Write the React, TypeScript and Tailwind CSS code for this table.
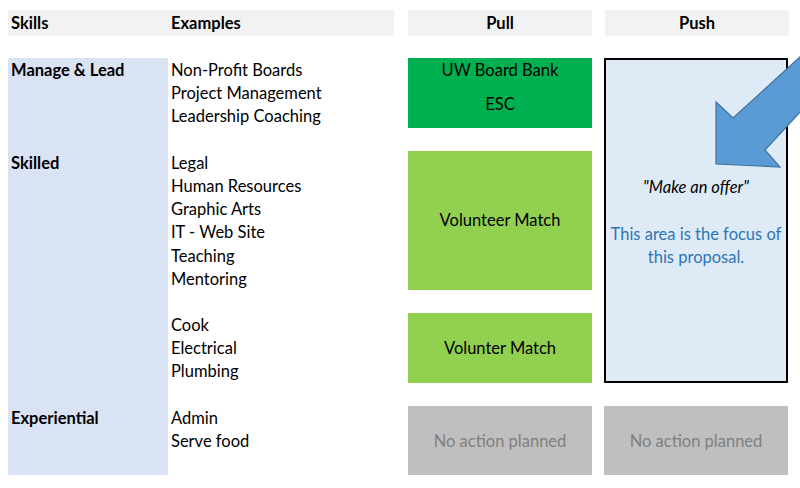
import React from "react";

type Line = { row: number; text: string };

const skills: Line[] = [
  { row: 1, text: "Manage & Lead" },
  { row: 5, text: "Skilled" },
  { row: 16, text: "Experiential" },
];

const examples: Line[] = [
  { row: 1, text: "Non-Profit Boards" },
  { row: 2, text: "Project Management" },
  { row: 3, text: "Leadership Coaching" },
  { row: 5, text: "Legal" },
  { row: 6, text: "Human Resources" },
  { row: 7, text: "Graphic Arts" },
  { row: 8, text: "IT - Web Site" },
  { row: 9, text: "Teaching" },
  { row: 10, text: "Mentoring" },
  { row: 12, text: "Cook" },
  { row: 13, text: "Electrical" },
  { row: 14, text: "Plumbing" },
  { row: 16, text: "Admin" },
  { row: 17, text: "Serve food" },
];

export default function App() {
  return (
    <div
      className="relative w-[800px] h-[488px] overflow-hidden bg-white text-[16.5px] text-black"
      style={{ fontFamily: "Lato, 'Liberation Sans', sans-serif" }}
    >
      <div className="pt-[10px] pl-2">
        {/* header row */}
        <div className="grid grid-cols-[386px_184px_183px] gap-x-[14px] h-6 font-bold leading-[26px]">
          <div className="bg-[#f2f2f2] flex">
            <span className="w-[160px] pl-[3px]">Skills</span>
            <span className="pl-[3px]">Examples</span>
          </div>
          <div className="bg-[#f2f2f2] text-center">Pull</div>
          <div className="bg-[#f2f2f2] text-center -ml-px">Push</div>
        </div>

        {/* body */}
        <div className="mt-6 grid grid-cols-[160px_226px_14px_184px_13px_183px] grid-rows-[repeat(18,23.2px)] leading-[25px]">
          <div className="col-start-1 row-start-1 row-span-18 bg-[#dae3f3]" />
          {skills.map((s) => (
            <div
              key={s.text}
              className="col-start-1 pl-[3px] font-bold"
              style={{ gridRowStart: s.row }}
            >
              {s.text}
            </div>
          ))}
          {examples.map((e) => (
            <div key={e.text} className="col-start-2 pl-[3px]" style={{ gridRowStart: e.row }}>
              {e.text}
            </div>
          ))}

          {/* pull */}
          <div className="col-start-4 row-start-1 row-span-3 bg-[#00b050] flex flex-col items-center leading-[23px] pt-px">
            <span>UW Board Bank</span>
            <span className="mt-[11px]">ESC</span>
          </div>
          <div className="col-start-4 row-start-5 row-span-6 bg-[#92d050] flex items-center justify-center pt-px">
            Volunteer Match
          </div>
          <div className="col-start-4 row-start-12 row-span-3 bg-[#92d050] flex items-center justify-center pt-px">
            Volunter Match
          </div>
          <div className="col-start-4 row-start-16 row-span-3 bg-[#bfbfbf] text-[#7f7f7f] flex items-center justify-center pt-px">
            No action planned
          </div>

          {/* push */}
          <div className="col-start-6 row-start-1 row-span-14 -ml-px border-2 border-black bg-[#deebf7] flex flex-col items-center text-center leading-[23px] pt-[116px]">
            <span className="italic">"Make an offer"</span>
            <span className="mt-[24px] text-[#2e75b6]">
              This area is the focus of
              <br />
              this proposal.
            </span>
          </div>
          <div className="col-start-6 row-start-16 row-span-3 -ml-px bg-[#bfbfbf] text-[#7f7f7f] flex items-center justify-center pt-px">
            No action planned
          </div>
        </div>
      </div>

      {/* arrow over the push box */}
      <svg className="absolute left-0 top-0 pointer-events-none" width="800" height="488">
        <polygon
          points="716,102 733,118 812,46 814,97 765,150 780,167 716,164"
          fill="#5b9bd5"
          stroke="#41719c"
          strokeWidth="1.2"
          strokeLinejoin="miter"
        />
      </svg>
    </div>
  );
}
